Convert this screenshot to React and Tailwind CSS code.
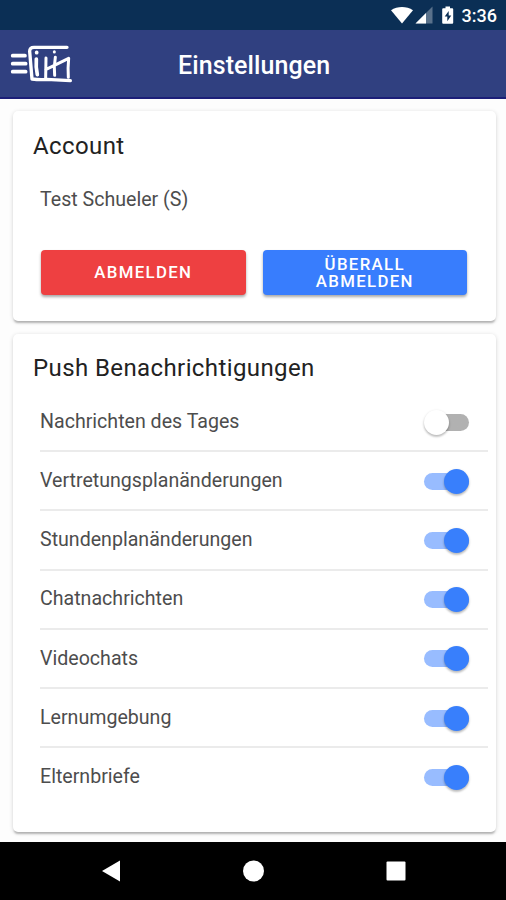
const settings = [
  { label: "Nachrichten des Tages", on: false },
  { label: "Vertretungsplanänderungen", on: true },
  { label: "Stundenplanänderungen", on: true },
  { label: "Chatnachrichten", on: true },
  { label: "Videochats", on: true },
  { label: "Lernumgebung", on: true },
  { label: "Elternbriefe", on: true },
];

function Toggle({ on }) {
  return (
    <span
      className={`mt-px flex h-[17px] w-[45px] items-center rounded-full ${
        on ? "justify-end bg-[#98bcff]" : "justify-start bg-linear-to-r from-transparent from-30% to-[#b1b1b1] to-30%"
      }`}
    >
      <span
        className={`size-[25px] shrink-0 rounded-full shadow-[0_2px_2px_rgba(0,0,0,0.16),0_1px_3px_rgba(0,0,0,0.16)] ${
          on ? "bg-[#387ffc]" : "bg-white"
        }`}
      />
    </span>
  );
}

function StatusBar() {
  return (
    <div className="flex h-[30px] shrink-0 items-start justify-end bg-[#0b2f55] pr-[9px] pt-[5px] text-white">
      <svg width="72" height="22" viewBox="390 5 72 22">
        <path d="M391 10.2C397.500 5.800 406.500 5.800 413 10.200L402 23.500Z" fill="#fff" />
        <path d="M432.500 6.500V23.500H415.500Z" fill="#fff" fillOpacity=".32" />
        <path d="M426 13V23.500H415.500Z" fill="#fff" />
        <path d="M445.500 6.500h4.500v1.800h2.200q1 0 1 1v13.400q0 1-1 1h-9q-1 0-1-1V9.300q0-1 1-1h2.300Z" fill="#fff" />
        <path d="M448.700 11l-4 5.600h2.600v4.600l4-5.800h-2.600Z" fill="#0b2f55" />
      </svg>
      <span className="text-[18px] font-medium leading-[22px]">3:36</span>
    </div>
  );
}

function Header() {
  return (
    <header className="flex h-[69px] shrink-0 items-center border-b-2 border-[#1c1f78] bg-[#304080] pl-[10px] text-white">
      <svg className="mt-px" width="63" height="40" viewBox="30 50 189 120" fill="none" stroke="#fff" strokeLinecap="round" strokeLinejoin="round">
        <path d="M38 85H75M38 109H77M38 133H77" strokeWidth="11" />
        <path d="M201 60L102 60Q89 60 89 72L96 155Q120 158 140 156Q175 158 211 160" strokeWidth="10" />
        <path d="M109 95Q107 120 112 142" strokeWidth="11" />
        <path d="M110 75V76" strokeWidth="11" />
        <path d="M138 92L137 152M137 127L206 93Q203 122 205 150M166 90Q161 120 164 144M163 73V74" strokeWidth="9" />
      </svg>
      <h1 className="ml-[105px] mt-[5px] text-[25px] font-medium leading-[30px] tracking-[0.1px]">Einstellungen</h1>
    </header>
  );
}

const cardClass =
  "flex flex-col rounded-[5px] bg-white shadow-[0_3px_2px_-1px_rgba(0,0,0,0.22),0_1px_4px_rgba(0,0,0,0.16)]";

const buttonClass =
  "h-[45px] rounded-[4px] text-[16.8px] font-medium leading-[17px] tracking-[1.35px] text-white shadow-[0_2px_3px_rgba(0,0,0,0.35)]";

export default function App() {
  return (
    <div className="flex h-[900px] w-[506px] flex-col overflow-hidden bg-[#fdfdfd] font-[Roboto,sans-serif] text-[#222]">
      <StatusBar />
      <Header />
      <main className="flex flex-1 flex-col gap-[13px] pl-[13px] pr-[10px] pt-3">
        <section className={`${cardClass} h-[210px] px-5 pt-[19px]`}>
          <h2 className="text-[24px] leading-8 tracking-[0.4px]">Account</h2>
          <p className="ml-[7px] mt-6 text-[19.6px] leading-7 text-[#4d4d4d]">Test Schueler (S)</p>
          <div className="ml-2 mr-[9px] mt-9 grid grid-cols-2 gap-[17px]">
            <button className={`${buttonClass} bg-[#ee4041]`}>ABMELDEN</button>
            <button className={`${buttonClass} bg-[#387dfd]`}>
              <span className="block">ÜBERALL</span>
              <span className="block">ABMELDEN</span>
            </button>
          </div>
        </section>
        <section className={`${cardClass} h-[498px] pl-5 pr-2 pt-[18px]`}>
          <h2 className="text-[24px] leading-8 tracking-[0.4px]">Push Benachrichtigungen</h2>
          <ul className="ml-[7px] mt-[9px] flex flex-col">
            {settings.map(({ label, on }) => (
              <li
                key={label}
                className="flex h-[59.2px] items-center justify-between border-b-2 border-[#ebebeb] pr-[19px] text-[19.6px] text-[#4d4d4d] last:border-transparent"
              >
                <span>{label}</span>
                <Toggle on={on} />
              </li>
            ))}
          </ul>
        </section>
      </main>
      <nav className="flex h-[58px] shrink-0 items-center bg-black">
        <svg width="506" height="58" fill="#fff">
          <path d="M102 29L120 18.500V39.500Z" />
          <circle cx="253.500" cy="29" r="10.500" />
          <rect x="386.500" y="19.500" width="19" height="19" rx="1" />
        </svg>
      </nav>
    </div>
  );
}
